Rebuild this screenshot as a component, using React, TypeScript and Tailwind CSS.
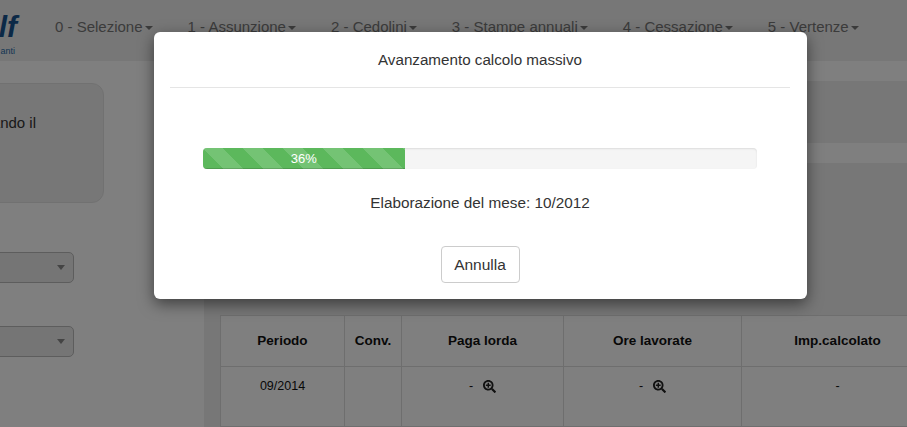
import React from "react";
import { FaSearchPlus } from "react-icons/fa";

const navItems = ["0 - Selezione", "1 - Assunzione", "2 - Cedolini", "3 - Stampe annuali", "4 - Cessazione", "5 - Vertenze"];

const FakeSelect = () => (
  <div className="ml-[-40px] w-[114px] h-[31px] bg-[#eaeaea] border border-[#bbbbbb] rounded-[5px] flex items-center justify-end pr-[8px]">
    <span className="w-0 h-0 border-x-[4px] border-x-transparent border-t-[5px] border-t-[#888888]" />
  </div>
);

const Zoomed = () => (
  <span className="inline-flex items-center gap-[10px]">
    - <FaSearchPlus className="text-[13px] text-[#222222]" />
  </span>
);

export default function App() {
  return (
    <div className="relative h-screen overflow-hidden bg-white font-['Liberation_Sans',Arial,sans-serif] text-[#333333]">
      {/* navbar */}
      <div className="h-[61px] bg-[#eeeeee] flex items-start">
        <div className="w-[55px] shrink-0 flex flex-col items-end pr-[38px] pt-[8px]">
          <span className="text-[30px] leading-[38px] font-bold italic text-[#17528f]">lf</span>
          <span className="text-[9px] leading-[10px] mr-[2px] text-[#2a6ca8]">anti</span>
        </div>
        <div className="flex gap-[35px] pt-[17px]">
          {navItems.map(item => (
            <div key={item} className="flex items-center text-[#777777] text-[15px] leading-[20px] whitespace-nowrap">
              {item}
              <span className="ml-[2px] mt-[2px] w-0 h-0 border-x-[4px] border-x-transparent border-t-[4px] border-t-[#777777]" />
            </div>
          ))}
        </div>
      </div>

      <div className="flex h-[366px]">
        {/* left column */}
        <div className="w-[204px] shrink-0 overflow-hidden">
          <div className="ml-[-120px] mt-[22px] w-[224px] h-[120px] bg-[#eeeeee] border border-[#e3e3e3] rounded-[12px] pt-[29px] pr-[67px] text-right text-[15px] leading-[20px]">
            Selezionando il
          </div>
          <div className="mt-[49px]"><FakeSelect /></div>
          <div className="mt-[43px]"><FakeSelect /></div>
        </div>

        {/* right column */}
        <div className="flex-1 min-w-0 flex flex-col bg-[#eeeeee]">
          <div className="h-[22px] bg-white" />
          <div className="h-[70px]" />
          <div className="h-[22px] bg-white" />
          <div className="pl-[16px] pt-[110px]">
            <div className="h-[26px] flex items-start text-[14px] leading-[17px] whitespace-nowrap">
              <span className="w-[205px]">Legenda del calcolo per mese</span>
              <span className="w-[57px] h-[26px] bg-white border border-[#cccccc] rounded-[4px]" />
              <span className="pl-[20px]">record per pagina</span>
            </div>
            <table className="mt-[16px] w-[713px] table-fixed border-collapse bg-white text-center text-[#111111]">
              <colgroup>
                <col className="w-[124px]" />
                <col className="w-[57px]" />
                <col className="w-[162px]" />
                <col className="w-[178px]" />
                <col className="w-[192px]" />
              </colgroup>
              <thead>
                <tr className="h-[51px] text-[13.5px] font-bold">
                  {["Periodo", "Conv.", "Paga lorda", "Ore lavorate", "Imp.calcolato"].map(h => (
                    <th key={h} className="border border-[#dddddd] font-bold">{h}</th>
                  ))}
                </tr>
              </thead>
              <tbody>
                <tr className="h-[60px] text-[12.5px] align-top">
                  <td className="border border-[#dddddd] pt-[10px]">09/2014</td>
                  <td className="border border-[#dddddd]" />
                  <td className="border border-[#dddddd] pt-[10px]"><Zoomed /></td>
                  <td className="border border-[#dddddd] pt-[10px]"><Zoomed /></td>
                  <td className="border border-[#dddddd] pt-[10px]">-</td>
                </tr>
              </tbody>
            </table>
          </div>
        </div>
      </div>

      {/* backdrop and dialog */}
      <div className="absolute inset-0 bg-black/50 flex items-start pt-[32px] pl-[154px]">
        <div className="w-[653px] h-[267px] bg-white rounded-[6px] shadow-[0_5px_15px_rgba(0,0,0,0.5)] pl-[16px] pr-[17px] flex flex-col">
          <div className="h-[56px] pt-[2px] border-b border-[#e5e5e5] flex items-center justify-center text-[15.2px]">
            Avanzamento calcolo massivo
          </div>
          <div className="mt-[60px] ml-[33px] mr-[33px] h-[21px] bg-[#f5f5f5] rounded-[4px] overflow-hidden shadow-[inset_0_1px_2px_rgba(0,0,0,0.1)]">
            <div className="w-[36.4%] h-full bg-[#5cb85c] bg-[linear-gradient(45deg,rgba(255,255,255,0.15)_25%,transparent_25%,transparent_50%,rgba(255,255,255,0.15)_50%,rgba(255,255,255,0.15)_75%,transparent_75%,transparent)] bg-[length:40px_40px] shadow-[inset_0_-1px_0_rgba(0,0,0,0.15)] text-center text-white text-[13px] leading-[21px]">
              36%
            </div>
          </div>
          <div className="mt-[24px] text-center text-[15.3px] leading-[20px]">Elaborazione del mese: 10/2012</div>
          <div className="mt-[33px] flex justify-center">
            <button className="w-[79px] h-[37px] bg-white border border-[#cccccc] rounded-[4px] text-[15.5px]">Annulla</button>
          </div>
        </div>
      </div>
    </div>
  );
}
